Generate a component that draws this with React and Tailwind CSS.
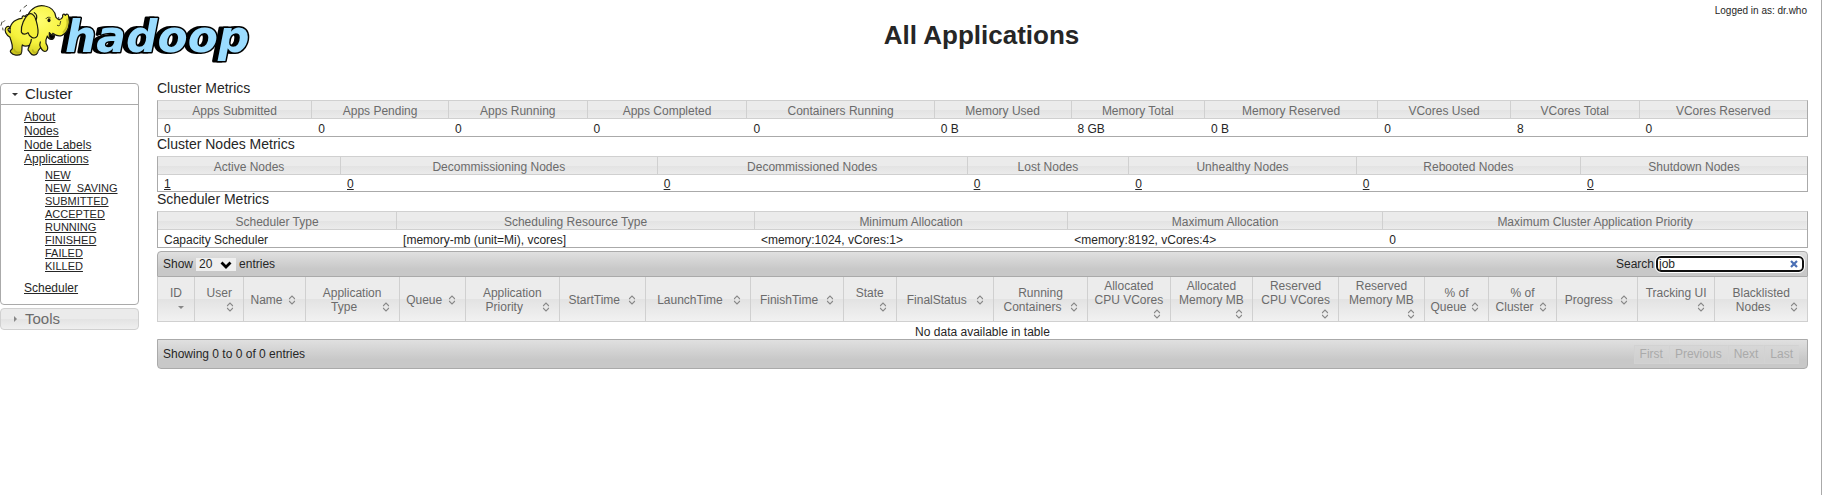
import React from "react";

const clusterMetrics = [
  { label: "Apps Submitted", value: "0", col: "w-[9.35%]" },
  { label: "Apps Pending", value: "0", col: "w-[8.3%]" },
  { label: "Apps Running", value: "0", col: "w-[8.4%]" },
  { label: "Apps Completed", value: "0", col: "w-[9.7%]" },
  { label: "Containers Running", value: "0", col: "w-[11.35%]" },
  { label: "Memory Used", value: "0 B", col: "w-[8.3%]" },
  { label: "Memory Total", value: "8 GB", col: "w-[8.1%]" },
  { label: "Memory Reserved", value: "0 B", col: "w-[10.5%]" },
  { label: "VCores Used", value: "0", col: "w-[8.05%]" },
  { label: "VCores Total", value: "8", col: "w-[7.8%]" },
  { label: "VCores Reserved", value: "0", col: "w-[10.15%]" },
];

const nodeMetrics = [
  { label: "Active Nodes", value: "1", col: "w-[11.1%]" },
  { label: "Decommissioning Nodes", value: "0", col: "w-[19.2%]" },
  { label: "Decommissioned Nodes", value: "0", col: "w-[18.8%]" },
  { label: "Lost Nodes", value: "0", col: "w-[9.8%]" },
  { label: "Unhealthy Nodes", value: "0", col: "w-[13.8%]" },
  { label: "Rebooted Nodes", value: "0", col: "w-[13.6%]" },
  { label: "Shutdown Nodes", value: "0", col: "w-[13.7%]" },
];

const schedulerMetrics = [
  { label: "Scheduler Type", value: "Capacity Scheduler", col: "w-[14.5%]" },
  { label: "Scheduling Resource Type", value: "[memory-mb (unit=Mi), vcores]", col: "w-[21.7%]" },
  { label: "Minimum Allocation", value: "<memory:1024, vCores:1>", col: "w-[19%]" },
  { label: "Maximum Allocation", value: "<memory:8192, vCores:4>", col: "w-[19.1%]" },
  { label: "Maximum Cluster Application Priority", value: "0", col: "w-[25.7%]" },
];

const appColumns = [
  { label: "ID", col: "w-[2.3%]", sorted: true },
  { label: "User", col: "w-[3%]" },
  { label: "Name", col: "w-[3.7%]" },
  { label: "Application Type", col: "w-[5.7%]" },
  { label: "Queue", col: "w-[4%]" },
  { label: "Application Priority", col: "w-[5.7%]" },
  { label: "StartTime", col: "w-[5.2%]" },
  { label: "LaunchTime", col: "w-[6.4%]" },
  { label: "FinishTime", col: "w-[5.6%]" },
  { label: "State", col: "w-[3.2%]" },
  { label: "FinalStatus", col: "w-[5.9%]" },
  { label: "Running Containers", col: "w-[5.7%]" },
  { label: "Allocated CPU VCores", col: "w-[5%]" },
  { label: "Allocated Memory MB", col: "w-[5%]" },
  { label: "Reserved CPU VCores", col: "w-[5.2%]" },
  { label: "Reserved Memory MB", col: "w-[5.2%]" },
  { label: "% of Queue", col: "w-[3.9%]" },
  { label: "% of Cluster", col: "w-[4.1%]" },
  { label: "Progress", col: "w-[4.9%]" },
  { label: "Tracking UI", col: "w-[4.7%]" },
  { label: "Blacklisted Nodes", col: "w-[5.6%]" },
];

const appStates = ["NEW", "NEW_SAVING", "SUBMITTED", "ACCEPTED", "RUNNING", "FINISHED", "FAILED", "KILLED"];

function Logo() {
  return (
    <svg viewBox="0 0 252 66" className="h-[66px] w-[252px]" role="img" aria-label="hadoop">
      <defs>
        <radialGradient id="skin" cx="0.5" cy="0.3" r="0.75">
          <stop offset="0" stopColor="#ffff73" />
          <stop offset="0.6" stopColor="#f6f23c" />
          <stop offset="1" stopColor="#c9c31c" />
        </radialGradient>
      </defs>
      <text
        x="65"
        y="52"
        className="drop-shadow-[-4px_0_0_#000]"
        fontFamily="'DejaVu Sans', sans-serif"
        fontWeight="700"
        fontStyle="italic"
        fontSize="44"
        fill="#9bdcff"
        stroke="#000"
        strokeWidth="3"
        strokeLinejoin="round"
        paintOrder="stroke"
      >
        hadoop
      </text>
      <g transform="scale(0.3333)" stroke="#1a1a10" strokeWidth="3.6" strokeLinecap="round" strokeLinejoin="round">
        <path
          fill="url(#skin)"
          d="M30 112C18 104 12 92 17 84C22 76 30 78 31 86C26 84 22 86 25 92C27 95 29 97 31 98C26 76 40 58 66 55C66 46 72 46 76 50C78 44 82 43 84 44C94 24 114 13 135 18C156 22 166 36 168 52C176 62 184 60 188 50C186 43 192 40 196 46C200 40 206 42 206 50C212 72 204 98 186 106C176 110 166 106 158 100C160 110 162 116 154 118C148 118 144 114 142 108C138 116 136 122 138 130C143 138 145 148 139 153C132 157 126 150 122 143C118 147 114 150 113 158C108 168 96 167 92 160L84 150C84 144 87 140 89 136C80 139 72 139 67 135C64 144 68 156 63 162C56 168 38 166 33 158C28 154 33 150 37 146C39 134 33 124 30 112Z"
        />
        <path fill="#f5ef38" d="M84 44C74 54 62 76 64 96C68 106 78 103 84 98C88 112 104 120 112 108C118 94 112 74 108 60C103 42 93 37 84 44Z" />
        <path fill="none" d="M108 60C112 50 110 42 103 38M88 136C92 130 94 126 94 118M122 143C119 136 119 130 121 126" />
        <path fill="#000" d="M148 98C152 104 158 107 164 107C163 114 160 118 154 118C149 115 147 108 148 98Z" />
        <ellipse cx="147" cy="61" rx="4.5" ry="6" fill="#111" stroke="none" />
        <path fill="none" strokeWidth="2.4" d="M138 56C141 51 147 50 151 53M176 52L177 60M182 64L180 72M172 76C175 78 178 78 180 75M6 66L3 76M14 62L10 66M8 84L9 90M72 22L80 16M62 30L60 35" />
        <path fill="none" stroke="#a8a21a" strokeWidth="5" d="M42 148C46 158 56 160 62 156M98 150C100 158 106 160 110 156M190 96C200 86 204 70 201 58" opacity="0.6" />
      </g>
    </svg>
  );
}

function SortIcon({ sorted }) {
  return (
    <span className="float-right flex h-[14px] w-4 items-center justify-center">
      {sorted ? (
        <svg viewBox="0 0 8 10" className="h-[10px] w-2" aria-hidden="true">
          <path d="M1 4H7L4 7Z" fill="#888" />
        </svg>
      ) : (
        <svg viewBox="0 0 8 10" className="h-[10px] w-2" aria-hidden="true">
          <path d="M1.500 4.200V3.500L4 1L6.500 3.500V4.200M1.500 5.800V6.500L4 9L6.500 6.500V5.800" fill="none" stroke="#888" strokeWidth="1.100" />
        </svg>
      )}
    </span>
  );
}

function MetricsTable({ title, columns, links }) {
  return (
    <section>
      <h2 className="mb-1 text-sm leading-[15px]">{title}</h2>
      <table className="w-full table-fixed border-separate border-spacing-0 border border-[#aaa] border-t-[#d0d0d0]">
        <colgroup>
          {columns.map((c) => (
            <col key={c.label} className={c.col} />
          ))}
        </colgroup>
        <thead>
          <tr className="bg-[linear-gradient(#ebebeb_50%,#e3e3e3_50%,#ececec)] text-[#6b6b6b]">
            {columns.map((c) => (
              <th
                key={c.label}
                scope="col"
                className="border-r border-b border-[#d0d0d0] pt-[3px] text-center leading-[14px] font-normal last:border-r-0"
              >
                {c.label}
              </th>
            ))}
          </tr>
        </thead>
        <tbody>
          <tr>
            {columns.map((c) => (
              <td key={c.label} className={links ? "h-4 pt-[2px] pl-[6px] leading-[14px]" : "pt-[3px] pl-[6px] leading-[14px]"}>
                {links ? (
                  <a href="#nodes" className="underline">
                    {c.value}
                  </a>
                ) : (
                  c.value
                )}
              </td>
            ))}
          </tr>
        </tbody>
      </table>
    </section>
  );
}

function Sidebar() {
  return (
    <nav className="mt-[2px] flex w-[139px] shrink-0 flex-col gap-[3px]">
      <div className="rounded border border-[#aaa]">
        <h3 className="border-b border-[#aaa]">
          <button type="button" className="flex w-full items-center gap-[6px] pl-[10px] text-left text-[15px] leading-5">
            <svg viewBox="0 0 8 8" className="size-2" aria-hidden="true">
              <path d="M1 3H7L4 6Z" fill="#333" />
            </svg>
            Cluster
          </button>
        </h3>
        <ul className="pt-1 pb-[9px] pl-[23px] leading-[14px]">
          <li className="pt-[1px]"><a href="#about" className="underline">About</a></li>
          <li><a href="#nodes" className="underline">Nodes</a></li>
          <li><a href="#nodelabels" className="underline">Node Labels</a></li>
          <li>
            <a href="#apps" className="underline">Applications</a>
            <ul className="pt-[3px] pb-2 pl-[21px] text-[11px] leading-[13px]">
              {appStates.map((s) => (
                <li key={s}>
                  <a href={"#apps/" + s} className="underline">{s}</a>
                </li>
              ))}
            </ul>
          </li>
          <li><a href="#scheduler" className="underline">Scheduler</a></li>
        </ul>
      </div>
      <h3 className="rounded border border-[#d0d0d0] bg-[linear-gradient(#ebebeb_50%,#e3e3e3_50%,#efefef)] text-[#6b6b6b]">
        <button type="button" className="flex w-full items-center gap-[6px] pl-[10px] text-left text-[15px] leading-5">
          <svg viewBox="0 0 8 8" className="size-2" aria-hidden="true">
            <path d="M3 1V7L6 4Z" fill="#888" />
          </svg>
          Tools
        </button>
      </h3>
    </nav>
  );
}

function AppsTable() {
  return (
    <section className="mt-[3px]">
      <div className="flex h-[26px] items-center justify-between rounded-t border border-[#aaa] bg-[linear-gradient(#e0e0e0,#c8c8c8_70%)] pr-[3px] pl-[5px]">
        <label className="flex items-center gap-[3px]">
          Show
          <span className="relative flex">
            <select defaultValue="20" className="h-[13px] w-10 appearance-none bg-[#efefef] pl-[3px] text-xs leading-[13px]">
              <option>20</option>
              <option>50</option>
              <option>100</option>
            </select>
            <svg viewBox="0 0 12 8" className="pointer-events-none absolute top-[3px] right-1 h-2 w-3" aria-hidden="true">
              <path d="M1.500 1.500L6 6L10.500 1.500" fill="none" stroke="#000" strokeWidth="2.800" />
            </svg>
          </span>
          entries
        </label>
        <div className="flex items-center gap-[2px]">
          <label htmlFor="search">Search</label>
          <span className="flex h-4 w-[148px] items-center rounded-[5px] border-2 border-[#101010] bg-white pr-1 pl-[1px] outline outline-white">
            <input id="search" type="text" defaultValue="job" className="w-full min-w-0 bg-transparent text-xs leading-3 outline-none" />
            <button type="button" aria-label="Clear" className="shrink-0">
              <svg viewBox="0 0 8 8" className="size-2" aria-hidden="true">
                <path d="M1 1L7 7M7 1L1 7" stroke="#4a6fb5" strokeWidth="2.2" />
              </svg>
            </button>
          </span>
        </div>
      </div>
      <table className="w-full table-fixed border-separate border-spacing-0">
        <colgroup>
          {appColumns.map((c) => (
            <col key={c.label} className={c.col} />
          ))}
        </colgroup>
        <thead>
          <tr className="bg-[linear-gradient(#ececec_50%,#e3e3e3_50%,#f2f2f2)] text-[#6b6b6b]">
            {appColumns.map((c) => (
              <th
                key={c.label}
                scope="col"
                className="h-[45px] border-r border-b border-[#d0d0d0] px-[5px] pt-[2px] align-middle font-normal first:border-l"
              >
                <button type="button" className="block w-full text-center leading-[14px]">
                  {c.label}
                  <SortIcon sorted={c.sorted} />
                </button>
              </th>
            ))}
          </tr>
        </thead>
        <tbody>
          <tr>
            <td colSpan={21} className="pt-[3px] text-center leading-[14px]">
              No data available in table
            </td>
          </tr>
        </tbody>
      </table>
      <div className="flex h-[30px] items-center justify-between rounded-b border border-[#aaa] bg-[linear-gradient(#e0e0e0,#c8c8c8_70%)] pr-2 pl-[5px]">
        <p>Showing 0 to 0 of 0 entries</p>
        <div className="flex text-[#aaa]">
          {["First", "Previous", "Next", "Last"].map((b) => (
            <button key={b} type="button" disabled className="h-[19px] border border-[#d2d2d2] border-r-transparent bg-[#d5d5d5]/60 px-[5px] leading-[14px]">
              {b}
            </button>
          ))}
        </div>
      </div>
    </section>
  );
}

export default function App() {
  return (
    <div className="min-h-screen border-r border-[#aaa] bg-white font-['Liberation_Sans',Arial,sans-serif] text-xs text-[#262626]">
      <header className="grid h-[81px] grid-cols-[1fr_auto_1fr] items-start">
        <Logo />
        <h1 className="pt-5 pl-[142px] text-[26px] leading-[30px] font-bold">All Applications</h1>
        <p className="pt-[5px] pr-[14px] text-right text-[10px] leading-3">Logged in as: dr.who</p>
      </header>
      <div className="flex items-start gap-[18px] pr-[13px]">
        <Sidebar />
        <main className="min-w-0 flex-1">
          <MetricsTable title="Cluster Metrics" columns={clusterMetrics} />
          <MetricsTable title="Cluster Nodes Metrics" columns={nodeMetrics} links />
          <MetricsTable title="Scheduler Metrics" columns={schedulerMetrics} />
          <AppsTable />
        </main>
      </div>
    </div>
  );
}
